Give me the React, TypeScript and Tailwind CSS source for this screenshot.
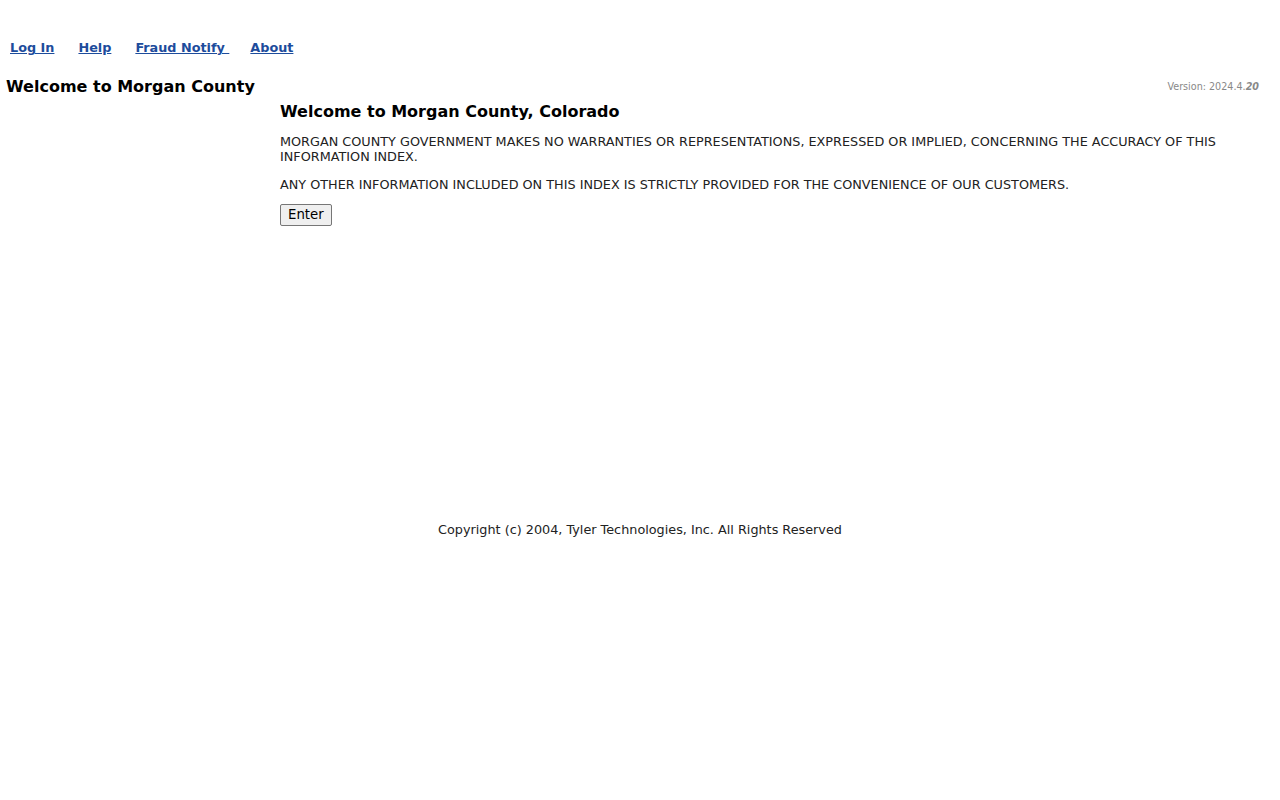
import React from "react";

const App = () => {
    return (
        <div className="w-full min-h-[800px] bg-white text-[#222] font-['DejaVu_Sans',sans-serif]">
            <div className="h-[38px]" />
            <nav className="flex items-center pl-[10px] h-[20px] text-[12.8px] font-bold text-[#1d4c9c]">
                <a href="#" className="underline mr-[24px]">Log In</a>
                <a href="#" className="underline mr-[24px]">Help</a>
                <a href="#" className="underline mr-[21px] whitespace-pre">Fraud Notify </a>
                <a href="#" className="underline">About</a>
            </nav>
            <div className="flex mt-[20px]">
                <div className="w-[280px] pl-[6px] shrink-0">
                    <h1 className="text-[16px] font-bold text-black leading-[18px]">Welcome to Morgan County</h1>
                </div>
                <div className="flex-1 pr-[21px]">
                    <div className="text-right text-[9.6px] text-[#888] leading-[12px] pt-[3px]">
                        Version: 2024.4.<b><i>20</i></b>
                    </div>
                    <h2 className="text-[16px] font-bold text-black mt-[9px] leading-[20px]">
                        Welcome to Morgan County, Colorado
                    </h2>
                    <p className="text-[12.8px] leading-[15px] mt-[12px]">
                        MORGAN COUNTY GOVERNMENT MAKES NO WARRANTIES OR REPRESENTATIONS, EXPRESSED OR IMPLIED, CONCERNING THE ACCURACY OF THIS INFORMATION INDEX.
                    </p>
                    <p className="text-[12.8px] leading-[15px] mt-[13px]">
                        ANY OTHER INFORMATION INCLUDED ON THIS INDEX IS STRICTLY PROVIDED FOR THE CONVENIENCE OF OUR CUSTOMERS.
                    </p>
                    <button className="mt-[12px] border border-[#767676] bg-[#efefef] rounded-[2px] px-[7px] h-[22px] text-[13.3px] text-black leading-[20px]">
                        Enter
                    </button>
                </div>
            </div>
            <div className="text-center text-[12.8px] mt-[294px]">
                Copyright (c) 2004, Tyler Technologies, Inc. All Rights Reserved
            </div>
        </div>
    );
};

export default App;
